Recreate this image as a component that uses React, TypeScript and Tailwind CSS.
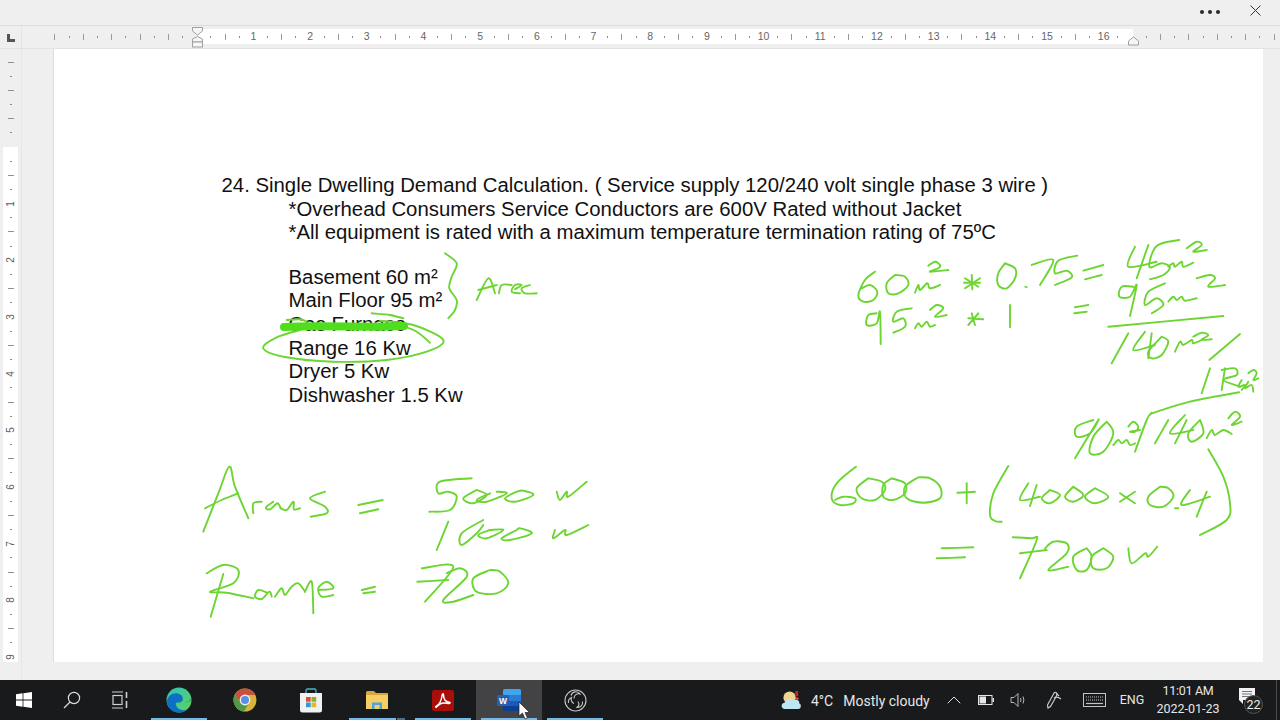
import { ChevronUp } from 'lucide-react';

const CELL = 'w-[14.175px] shrink-0 flex items-center justify-center';

// --- 水平ルーラーの目盛り ---
function HTick({ i }: { i: number }) {
  const n = i - 10;
  if (i % 2 !== 0) {
    return (
      <div className={CELL}>
        <div className="w-px h-[2px] bg-[#8a8a8a]" />
      </div>
    );
  }
  if (n > 0 && n % 4 === 0 && n / 4 <= 16) {
    return (
      <div className={CELL}>
        <span className="text-[10.5px] leading-none text-[#666]">{n / 4}</span>
      </div>
    );
  }
  if (n === 0) return <div className={CELL} />;
  return (
    <div className={CELL}>
      <div className="w-px h-[6px] bg-[#9a9a9a]" />
    </div>
  );
}

function range(from: number, to: number) {
  const out: number[] = [];
  for (let i = from; i <= to; i++) out.push(i);
  return out;
}

// --- 垂直ルーラーの目盛り ---
function VTick({ kind, label }: { kind: 'dot' | 'bar' | 'num'; label?: number }) {
  return (
    <div className="h-[14.175px] shrink-0 flex items-center justify-center">
      {kind === 'dot' && <div className="w-[2px] h-px bg-[#8a8a8a]" />}
      {kind === 'bar' && <div className="w-[6px] h-px bg-[#8f8f8f]" />}
      {kind === 'num' && (
        <span className="text-[10px] leading-none text-[#5c5c5c] -rotate-90">{label}</span>
      )}
    </div>
  );
}

// --- 手書きストローク ---
function smooth(p: number[], ox: number, oy: number) {
  const pts: [number, number][] = [];
  for (let i = 0; i < p.length; i += 2) pts.push([ox + p[i] / 3, oy + p[i + 1] / 3]);
  let d = `M${pts[0][0].toFixed(1)} ${pts[0][1].toFixed(1)}`;
  for (let i = 0; i < pts.length - 1; i++) {
    const a = pts[Math.max(i - 1, 0)];
    const b = pts[i];
    const c = pts[i + 1];
    const e = pts[Math.min(i + 2, pts.length - 1)];
    const c1x = b[0] + (c[0] - a[0]) / 6;
    const c1y = b[1] + (c[1] - a[1]) / 6;
    const c2x = c[0] - (e[0] - b[0]) / 6;
    const c2y = c[1] - (e[1] - b[1]) / 6;
    d += `C${c1x.toFixed(1)} ${c1y.toFixed(1)} ${c2x.toFixed(1)} ${c2y.toFixed(1)} ${c[0].toFixed(1)} ${c[1].toFixed(1)}`;
  }
  return d;
}

const topLeft = [
  [735, 10, 770, 40, 755, 80, 748, 115, 770, 150, 765, 180, 745, 205],
  [830, 150, 865, 85, 885, 130],
  [835, 120, 890, 105],
  [897, 130, 905, 105, 935, 105],
  [945, 118, 965, 105, 945, 105, 935, 125, 960, 130],
  [990, 105, 965, 115, 975, 130, 1010, 130],
  [260, 210, 300, 208, 320, 215],
  [245, 232, 280, 225],
  [515, 190, 570, 195, 610, 205],
  [600, 225, 650, 245, 690, 278],
  [540, 212, 640, 225, 730, 270, 680, 305, 560, 330, 400, 335, 260, 322, 190, 295, 230, 262, 300, 240],
];

const topRight = [
  [105, 125, 75, 150, 55, 195, 70, 215, 100, 210, 112, 185, 90, 165, 65, 175],
  [165, 135, 140, 160, 145, 190, 175, 190, 205, 165, 195, 140, 165, 135],
  [225, 188, 235, 165, 240, 180, 262, 160, 270, 175, 300, 165],
  [265, 107, 285, 95, 300, 105, 295, 115, 270, 125, 325, 120],
  [375, 145, 415, 170], [420, 145, 375, 175], [395, 135, 397, 178], [372, 158, 420, 158],
  [495, 100, 475, 130, 475, 165, 500, 175, 525, 145, 525, 115, 495, 100],
  [556, 170, 560, 172],
  [575, 105, 640, 90, 600, 165],
  [712, 77, 655, 92, 645, 130, 680, 122, 695, 142, 645, 165],
  [730, 122, 790, 105], [735, 148, 785, 135],
  [885, 50, 865, 110, 950, 95], [925, 45, 890, 145],
  [1018, 30, 950, 48, 928, 110, 965, 100, 990, 112, 970, 135, 930, 148],
  [985, 110, 1000, 100, 1005, 110, 1025, 95, 1030, 110, 1060, 98],
  [1040, 55, 1070, 35, 1085, 45, 1060, 65, 1100, 60],
  [110, 250, 85, 255, 80, 285, 110, 280, 120, 245, 122, 342],
  [215, 235, 170, 245, 160, 275, 190, 265, 195, 290, 160, 308],
  [225, 295, 235, 280, 245, 290, 260, 275, 270, 290, 285, 285],
  [270, 240, 290, 225, 310, 235, 285, 260, 320, 255],
  [385, 265, 430, 268], [395, 250, 405, 285], [415, 250, 385, 285],
  [510, 225, 510, 292],
  [705, 232, 745, 225], [703, 250, 740, 245],
  [880, 170, 845, 170, 838, 200, 870, 200, 890, 165, 870, 258],
  [975, 160, 925, 185, 915, 225, 950, 205, 970, 225, 935, 250],
  [985, 215, 1000, 200, 1010, 210, 1025, 200, 1035, 212, 1070, 205],
  [1070, 145, 1110, 135, 1125, 145, 1105, 170, 1155, 165],
  [805, 290, 1150, 258],
  [865, 310, 815, 400],
  [915, 305, 880, 360, 945, 345], [935, 310, 925, 385],
  [965, 320, 925, 365, 935, 385, 965, 375, 985, 335, 965, 320],
  [1005, 365, 1020, 335, 1030, 345, 1055, 330, 1060, 340, 1085, 330],
  [1060, 320, 1085, 308, 1105, 315, 1085, 330, 1115, 328],
  [1108, 390, 1200, 312],
  [1110, 415, 1085, 490],
  [1155, 415, 1145, 480],
  [1145, 420, 1185, 415, 1190, 435, 1150, 450, 1200, 470],
  [1205, 450, 1195, 470, 1215, 465, 1205, 480],
  [1225, 455, 1215, 475, 1235, 465, 1240, 485],
  [1225, 430, 1240, 420, 1250, 430, 1240, 450, 1255, 445],
  [1198, 487, 1050, 515, 945, 547, 935, 550],
  [885, 665, 920, 570, 935, 548],
  [760, 570, 710, 590, 710, 620, 750, 610, 775, 570, 705, 685],
  [800, 575, 760, 620, 750, 670, 790, 665, 820, 610, 800, 575],
  [820, 645, 835, 630, 845, 640, 860, 630, 870, 645, 885, 640],
  [865, 590, 880, 575, 895, 590, 885, 605, 870, 605, 900, 600],
  [985, 570, 945, 640],
  [1035, 555, 990, 610, 1060, 600], [1040, 570, 1005, 640],
  [1080, 570, 1045, 610, 1055, 635, 1090, 610, 1080, 570],
  [1100, 625, 1115, 600, 1125, 615, 1150, 600, 1175, 612],
  [1165, 565, 1185, 545, 1200, 560, 1175, 585, 1205, 575],
];

const bottomLeft = [
  [40, 245, 85, 130, 118, 50, 135, 110, 175, 205],
  [45, 175, 95, 150, 145, 130],
  [190, 190, 190, 160, 215, 155],
  [250, 155, 228, 172, 240, 178, 262, 160, 272, 175],
  [272, 175, 290, 180, 310, 155, 312, 178, 330, 175],
  [405, 125, 360, 145, 405, 170, 410, 190, 362, 200],
  [505, 165, 578, 150], [510, 190, 565, 178],
  [845, 85, 750, 95, 745, 130, 775, 125, 800, 140, 780, 180, 718, 185],
  [860, 120, 820, 145, 850, 160, 890, 135, 860, 120],
  [900, 130, 860, 150, 890, 155, 950, 130, 920, 125],
  [980, 125, 945, 145, 975, 155, 1030, 135, 1000, 122, 980, 125],
  [1100, 125, 1110, 150, 1130, 125, 1135, 140, 1190, 95],
  [775, 215, 740, 300],
  [880, 210, 815, 250, 815, 285, 860, 250, 880, 225],
  [900, 240, 865, 255, 890, 265, 940, 240, 900, 240],
  [980, 240, 935, 265, 960, 270, 1025, 250, 990, 235, 980, 240],
  [1095, 240, 1090, 265, 1125, 240, 1130, 255, 1195, 225],
  [100, 372, 62, 500],
  [50, 370, 100, 345, 145, 360, 130, 400, 60, 425, 110, 428, 190, 445],
  [232, 428, 205, 420, 195, 440, 215, 447, 238, 425, 245, 440],
  [255, 440, 275, 415, 285, 435, 305, 410, 325, 400, 345, 425],
  [345, 425, 365, 395, 370, 490],
  [385, 420, 430, 415, 410, 395, 385, 415, 395, 440, 430, 435],
  [515, 420, 555, 410], [520, 430, 555, 425],
  [695, 355, 790, 350, 705, 455],
  [682, 395, 775, 390],
  [770, 370, 810, 355, 830, 380, 760, 450, 790, 455, 850, 435],
  [900, 360, 850, 385, 860, 425, 920, 430, 955, 400, 930, 365, 900, 360],
];

const bottomRight = [
  [108, 80, 50, 130, 35, 175, 60, 195, 100, 190, 105, 175, 70, 170, 45, 180],
  [145, 115, 110, 145, 125, 175, 165, 180, 195, 150, 185, 125, 145, 115],
  [215, 115, 190, 135, 190, 170, 220, 180, 255, 160, 255, 130, 215, 115],
  [295, 112, 255, 140, 260, 175, 310, 188, 360, 175, 360, 140, 330, 115, 295, 112],
  [412, 158, 465, 155], [440, 130, 440, 190],
  [565, 78, 520, 160, 510, 225, 525, 243, 545, 245],
  [625, 130, 600, 180, 660, 170], [650, 135, 630, 198],
  [690, 150, 665, 175, 690, 190, 720, 165, 690, 150],
  [760, 140, 735, 170, 760, 185, 790, 165, 760, 140],
  [825, 145, 795, 170, 825, 190, 865, 170, 825, 145],
  [900, 160, 945, 190], [945, 155, 900, 185],
  [1020, 140, 985, 170, 990, 195, 1030, 200, 1060, 170, 1045, 145, 1020, 140],
  [1065, 205, 1075, 205],
  [1110, 150, 1085, 195, 1170, 170], [1160, 155, 1130, 230],
  [1165, 28, 1210, 110, 1230, 190, 1220, 240, 1140, 285],
  [365, 325, 460, 322], [350, 355, 435, 352],
  [578, 292, 635, 295, 650, 300, 600, 415],
  [600, 340, 680, 330],
  [675, 325, 700, 305, 740, 310, 740, 340, 685, 390, 745, 380],
  [800, 325, 760, 350, 770, 390, 800, 390, 815, 350, 800, 325],
  [850, 325, 815, 350, 820, 385, 860, 385, 880, 350, 850, 325],
  [925, 325, 935, 370, 975, 340, 985, 350, 1012, 320],
];

function Ink() {
  const group = (strokes: number[][], ox: number, oy: number) =>
    strokes.map((s, i) => <path key={`${ox}-${i}`} d={smooth(s, ox, oy)} />);
  return (
    <svg
      className="absolute inset-0 pointer-events-none"
      width="1280"
      height="720"
      fill="none"
      stroke="#6cd532"
      strokeWidth="1.9"
      strokeLinecap="round"
      strokeLinejoin="round"
    >
      {group(topLeft, 200, 250)}
      {group(topRight, 840, 230)}
      {group(bottomLeft, 190, 450)}
      {group(bottomRight, 820, 440)}
      <path d="M284 327 C320 325 370 328 404 326" stroke="#4fde1c" strokeWidth="8" />
    </svg>
  );
}

// --- タスクバーのアイコン ---
function WindowsIcon() {
  return (
    <svg width="16" height="16" viewBox="0 0 16 16" fill="#fff">
      <path d="M0 2.3 6.6 1.3V7.5H0ZM7.4 1.2 16 0V7.5H7.4ZM0 8.4H6.6V14.7L0 13.7ZM7.4 8.4H16V16L7.4 14.8Z" />
    </svg>
  );
}

function SearchIcon() {
  return (
    <svg width="18" height="18" viewBox="0 0 18 18" fill="none" stroke="#dcdcdc" strokeWidth="1.2">
      <circle cx="11" cy="7" r="5.6" />
      <path d="M7 11 1 17" />
    </svg>
  );
}

function TaskViewIcon() {
  return (
    <svg width="18" height="18" viewBox="0 0 18 18" fill="none" stroke="#cfcfcf" strokeWidth="1.2">
      <path d="M1 1h11M1 17h11" />
      <rect x="2" y="4.5" width="9" height="9" />
      <path d="M15.5 1v6M15.5 10v7" strokeWidth="1.6" />
    </svg>
  );
}

function EdgeIcon() {
  return (
    <svg width="26" height="26" viewBox="0 0 26 26">
      <defs>
        <linearGradient id="edgeA" x1="0" y1="0" x2="1" y2="1">
          <stop offset="0" stopColor="#2fc3c0" />
          <stop offset="1" stopColor="#5fd35a" />
        </linearGradient>
      </defs>
      <circle cx="13" cy="13" r="12.5" fill="url(#edgeA)" />
      <path d="M1 14C2 7 10 4 15 8c3 3 2 6 0 7-3 1-6-.5-5 3 1 4 7 7 12 4-3 3-6 3.5-9 3.5C6 25.500 .5 20 1 14Z" fill="#0f6fc6" />
      <path d="M17 15c5 1 8-1 8-4-1 4-5 5-8 4Z" fill="#1b1b1b" />
    </svg>
  );
}

function ChromeIcon() {
  return (
    <svg width="24" height="24" viewBox="0 0 24 24">
      <circle cx="12" cy="12" r="11.500" fill="#d8b53a" />
      <path d="M12 .5A11.500 11.500 0 0 0 2 6.300L7 15 12 7H22.300A11.500 11.500 0 0 0 12 .5Z" fill="#c8503f" />
      <path d="M2 6.300A11.500 11.500 0 0 0 11 23.500L16 15 7 15Z" fill="#4d9a4a" />
      <circle cx="12" cy="12" r="5.400" fill="#f2f2f2" />
      <circle cx="12" cy="12" r="4" fill="#5b8fdc" />
    </svg>
  );
}

function StoreIcon() {
  return (
    <svg width="24" height="25" viewBox="0 0 24 25">
      <path d="M7 6V2.500Q7 1 8.500 1H15.500Q17 1 17 2.500V6" fill="none" stroke="#45b6c8" strokeWidth="1.300" />
      <path d="M1 5H23V22Q23 24.500 20.500 24.500H3.500Q1 24.500 1 22Z" fill="#f1f1f1" />
      <rect x="7" y="9" width="4.700" height="4.700" fill="#d9502e" />
      <rect x="12.500" y="9" width="4.700" height="4.700" fill="#7fb33a" />
      <rect x="7" y="14.500" width="4.700" height="4.700" fill="#2f9bd6" />
      <rect x="12.500" y="14.500" width="4.700" height="4.700" fill="#e9b52a" />
    </svg>
  );
}

function FolderIcon() {
  return (
    <svg width="22" height="18" viewBox="0 0 22 18">
      <path d="M0 1.500Q0 0 1.500 0H8L10 2H22V5H0Z" fill="#d9a63a" />
      <path d="M0 4H22V18H0Z" fill="#f5cf63" />
      <path d="M6 18V11.500H16V18H13.500V14H8.500V18Z" fill="#4fa3d8" />
    </svg>
  );
}

function AcrobatIcon() {
  return (
    <svg width="22" height="21" viewBox="0 0 22 21">
      <rect width="22" height="21" rx="2.500" fill="#a90f0a" />
      <path
        d="M4 16.500C7 15 9.500 10 10.300 4.500 10.500 3.500 11.500 3.500 11.500 5 11.500 9 14 12 18 12.500 18.500 13.500 16 13.800 13 13 10 12.500 7 14 4.500 17 3.500 17.500 3.500 16.800 4 16.500Z"
        fill="none"
        stroke="#fff"
        strokeWidth="1.500"
        strokeLinejoin="round"
      />
    </svg>
  );
}

function WordIcon() {
  return (
    <svg width="24" height="22" viewBox="0 0 24 22">
      <path d="M6 1.500Q6 0 7.500 0H22.500Q24 0 24 1.500V6H6Z" fill="#41a5ee" />
      <rect x="6" y="6" width="18" height="6" fill="#2b7cd3" />
      <rect x="6" y="12" width="18" height="5" fill="#185abd" />
      <path d="M6 17H24V20.500Q24 22 22.500 22H7.500Q6 22 6 20.500Z" fill="#103f91" />
      <rect x="0" y="6" width="12" height="11" rx="1" fill="#2560b5" />
      <text x="6" y="14.500" textAnchor="middle" fontSize="8.500" fontWeight="700" fill="#fff" fontFamily="Liberation Sans, sans-serif">W</text>
    </svg>
  );
}

function ObsIcon() {
  return (
    <svg width="23" height="23" viewBox="0 0 23 23" fill="none" stroke="#c4c4c4" strokeWidth="1.100">
      <circle cx="11.500" cy="11.500" r="10.500" />
      <path d="M7 6.500A5 5 0 0 1 16 5 4.500 4.500 0 0 0 10 9.500" />
      <path d="M18.500 12.500A5 5 0 0 1 13 18.500 4.500 4.500 0 0 0 14 12.500" />
      <path d="M4.500 14A5 5 0 0 1 7.500 8.500 4.500 4.500 0 0 0 10 14.500" />
    </svg>
  );
}

function WeatherIcon() {
  return (
    <svg width="21" height="19" viewBox="0 0 22 20">
      <circle cx="9" cy="7" r="6.500" fill="#f0d590" />
      <path d="M4 19C0 19-1 13 4 12 5 8 11 7 13 10 17 8 20 11 19 13 22 14 21 19 18 19Z" fill="#bfe6f5" />
      <path d="M15 0 18 0V5L15 6Z" fill="#c2272d" />
      <circle cx="17" cy="8" r="1.500" fill="#e4484d" />
    </svg>
  );
}

function BatteryIcon() {
  return (
    <svg width="16" height="10" viewBox="0 0 16 10">
      <rect x=".5" y=".5" width="13.500" height="9" fill="none" stroke="#e6e6e6" />
      <rect x="1.500" y="1.500" width="6.500" height="7" fill="#e6e6e6" />
      <rect x="14.500" y="3" width="1.500" height="4" fill="#e6e6e6" />
    </svg>
  );
}

function VolumeIcon() {
  return (
    <svg width="16" height="16" viewBox="0 0 16 16" fill="none" stroke="#b5b5b5" strokeWidth="1">
      <path d="M1 5.500H4L8 1.500V14.500L4 10.500H1Z" />
      <path d="M10.500 6Q11.500 8 10.500 10M13 4.500Q14.800 8 13 11.500" />
    </svg>
  );
}

function PenIcon() {
  return (
    <svg width="16" height="18" viewBox="0 0 16 18" fill="none" stroke="#c9c9c9" strokeWidth="1.200">
      <path d="M2 17 1.500 14 8 2Q9.500 .5 10.500 2L11 4 4.500 15.500Z" />
      <path d="M8 7Q11 5 15 8M10 2 13 5" />
    </svg>
  );
}

function KeyboardIcon() {
  return (
    <svg width="23" height="14" viewBox="0 0 23 14" fill="none" stroke="#c4c4c4">
      <rect x=".5" y=".5" width="22" height="13" strokeWidth="1" />
      <path d="M3 4H20M3 7H20" strokeDasharray="1 1" />
      <path d="M3 10.500H20" strokeWidth="1.200" />
    </svg>
  );
}

function NotificationIcon() {
  return (
    <div className="relative w-[20px] h-[24px]">
      <svg width="16" height="16" viewBox="0 0 16 16" className="absolute left-0 top-0">
        <path d="M0 0H16V12H4V16L0 12Z" fill="#f2f2f2" />
        <path d="M3 3.500H13M3 6H13M3 8.500H10" stroke="#555" strokeWidth=".8" />
      </svg>
      <span className="absolute left-[5px] top-[7px] w-[19px] h-[19px] rounded-full bg-[#222] border border-[#555] text-[12.5px] leading-[17px] text-center text-[#eee] font-['Roboto',sans-serif]">
        22
      </span>
    </div>
  );
}

const apps = [
  { id: 'edge', icon: <EdgeIcon />, open: true },
  { id: 'chrome', icon: <ChromeIcon />, open: false },
  { id: 'store', icon: <StoreIcon />, open: false },
  { id: 'files', icon: <FolderIcon />, open: true, stacked: true },
  { id: 'acrobat', icon: <AcrobatIcon />, open: true },
  { id: 'word', icon: <WordIcon />, open: true, active: true },
  { id: 'obs', icon: <ObsIcon />, open: true },
];

function Taskbar() {
  return (
    <div className="h-[40px] shrink-0 bg-[#191a1c] flex text-[#e6e6e6] font-['Roboto',sans-serif]">
      <div className="w-[48px] flex items-center justify-center"><WindowsIcon /></div>
      <div className="w-[48px] flex items-center justify-center"><SearchIcon /></div>
      <div className="w-[48px] flex items-center justify-center"><TaskViewIcon /></div>
      <div className="w-[2px]" />
      {apps.map(app => (
        <div
          key={app.id}
          className={`w-[66px] relative flex items-center justify-center ${app.active ? 'bg-[#434345]' : ''}`}
        >
          {app.icon}
          {app.open && !app.stacked && (
            <div className="absolute bottom-0 left-[5px] right-[5px] h-[2px] bg-[#76b9e6]" />
          )}
          {app.stacked && (
            <div className="absolute bottom-0 left-[5px] right-[5px] h-[2px] flex gap-px">
              <div className="flex-1 bg-[#76b9e6]" />
              <div className="w-[8px] bg-[#4f6f88]" />
            </div>
          )}
        </div>
      ))}
      <div className="ml-auto w-[500px] flex items-center">
        <div className="w-[162px] flex items-center text-[14px] pl-[1px]">
          <WeatherIcon />
          <span className="ml-[9px] mt-[3px]">4°C</span>
          <span className="ml-[10px] mt-[3px]">Mostly cloudy</span>
        </div>
        <div className="w-[24px] flex justify-center">
          <ChevronUp size={24} strokeWidth={1} color="#dedede" />
        </div>
        <div className="w-[40px] flex justify-center"><BatteryIcon /></div>
        <div className="w-[24px] flex justify-center"><VolumeIcon /></div>
        <div className="w-[48px] flex justify-center"><PenIcon /></div>
        <div className="w-[32px] flex justify-center"><KeyboardIcon /></div>
        <div className="w-[44px] text-center text-[12.5px]">ENG</div>
        <div className="w-[68px] flex flex-col items-center text-[12.5px] leading-[18px]">
          <span className="tracking-[-0.3px]">11:01 AM</span>
          <span>2022-01-23</span>
        </div>
        <div className="w-[54px] flex justify-center"><NotificationIcon /></div>
        <div className="w-[4px] h-full border-l border-[#4a4a4a]" />
      </div>
    </div>
  );
}

export default function App() {
  return (
    <div className="relative w-[1280px] h-[720px] overflow-hidden flex flex-col bg-[#efefef] font-['Liberation_Sans',Arial,sans-serif]">
      {/* タイトルバー */}
      <div className="h-[26px] shrink-0 flex justify-end border-b border-[#dcdcdc]">
        <div className="flex gap-[4px] mr-[30px] mt-[10px]">
          <div className="w-[4px] h-[4px] rounded-full bg-[#2a2a2a]" />
          <div className="w-[4px] h-[4px] rounded-full bg-[#2a2a2a]" />
          <div className="w-[4px] h-[4px] rounded-full bg-[#2a2a2a]" />
        </div>
        <svg width="11" height="11" viewBox="0 0 11 11" className="mr-[19px] mt-[5px]" stroke="#333" strokeWidth="1">
          <path d="M.5.5 10.500 10.500M10.500.5.5 10.500" />
        </svg>
      </div>

      {/* 水平ルーラー */}
      <div className="relative h-[23px] shrink-0 flex border-b border-[#e2e2e2]">
        <div className="w-[22px] flex items-center justify-center border-r border-[#e4e4e4]">
          <svg width="8" height="8" viewBox="0 0 8 8" className="ml-[1px] mt-[2px]" fill="#555">
            <path d="M0 0H3V5H8V8H0Z" />
          </svg>
        </div>
        <div className="w-[175px] flex pl-[25.900px] pt-[3px] pb-[4px]">
          {range(0, 9).map(i => <HTick key={i} i={i} />)}
        </div>
        <div className="w-[936px] flex pl-[6.800px] mt-[3px] mb-[4px] bg-white overflow-hidden">
          {range(11, 75).map(i => <HTick key={i} i={i} />)}
        </div>
        <div className="flex-1 flex pl-[6.400px] pt-[3px] pb-[4px] overflow-hidden">
          {range(77, 86).map(i => <HTick key={i} i={i} />)}
        </div>
        {/* インデントマーカー */}
        <svg className="absolute left-[191px] top-[0px]" width="13" height="23" viewBox="0 0 13 23" fill="#f6f6f6" stroke="#a0a0a0">
          <path d="M1.500 1.500H11.500V5L6.500 9 1.500 5Z" />
          <path d="M1.500 16V13L6.500 10.500 11.500 13V16Z" />
          <rect x="1.500" y="16" width="10" height="5" />
        </svg>
        <svg className="absolute left-[1127px] top-[10px]" width="13" height="10" viewBox="0 0 13 10" fill="#f6f6f6" stroke="#a0a0a0">
          <path d="M1.500 9V5L6.500 1 11.500 5V9Z" />
        </svg>
      </div>

      {/* 本体 */}
      <div className="flex-1 flex min-h-0">
        <div className="w-[22px] shrink-0 flex flex-col border-r border-[#e6e6e6]">
          <div className="h-[98px] pt-[6px] overflow-hidden">
            {range(0, 5).map(i => <VTick key={i} kind={i % 2 === 0 ? 'bar' : 'dot'} />)}
          </div>
          <div className="h-[515px] pt-[7px] bg-white overflow-hidden mx-[3px]">
            {range(1, 36).map(k => (
              <VTick
                key={k}
                kind={k % 4 === 0 ? 'num' : k % 2 === 0 ? 'bar' : 'dot'}
                label={k / 4}
              />
            ))}
          </div>
        </div>
        <div className="w-[31px] shrink-0" />
        <div className="w-[1210px] h-[613px] shrink-0 bg-white border-l border-[#dddddd] pt-[125px] pl-[167.500px] text-[20.35px] leading-[23.6px] text-[#111] whitespace-nowrap">
          <p>24. Single Dwelling Demand Calculation. ( Service supply 120/240 volt single phase 3 wire )</p>
          <div className="pl-[67px]">
            <p>*Overhead Consumers Service Conductors are 600V Rated without Jacket</p>
            <p>*All equipment is rated with a maximum temperature termination rating of 75ºC</p>
            <div className="mt-[21px]">
              <p>Basement 60 m²</p>
              <p>Main Floor 95 m²</p>
              <p>Gas Furnace</p>
              <p>Range 16 Kw</p>
              <p>Dryer 5 Kw</p>
              <p>Dishwasher 1.5 Kw</p>
            </div>
          </div>
        </div>
      </div>

      <Taskbar />

      <Ink />

      {/* マウスカーソル */}
      <svg className="absolute left-[518px] top-[702px]" width="12" height="18" viewBox="0 0 12 18">
        <path d="M1 0V14L4.500 11 7 17 9.500 16 7 10.500H11.500Z" fill="#fff" stroke="#222" strokeWidth=".7" />
      </svg>
    </div>
  );
}
